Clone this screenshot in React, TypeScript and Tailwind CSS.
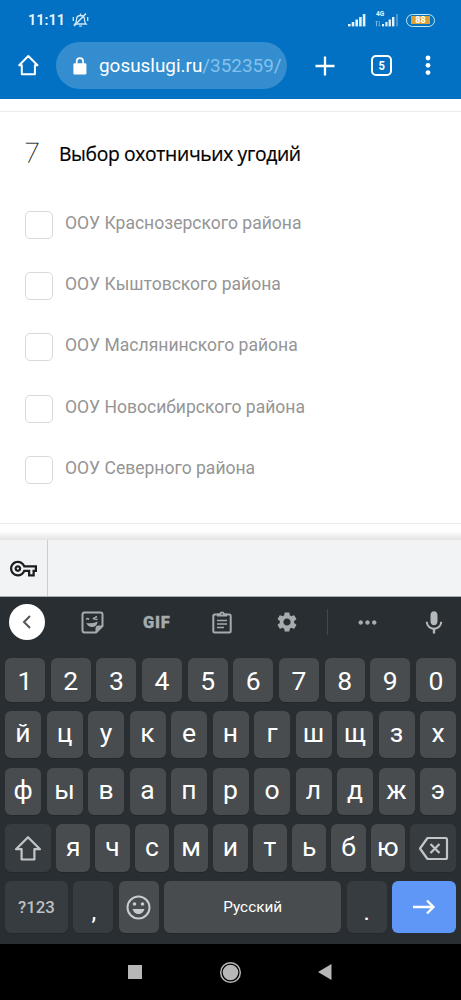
import React from "react";
import {
  MdMic,
  MdMoreHoriz,
  MdOutlineVpnKey,
  MdSettings,
} from "react-icons/md";

const DIGITS = ["1", "2", "3", "4", "5", "6", "7", "8", "9", "0"];
const ROW_TOP = ["й", "ц", "у", "к", "е", "н", "г", "ш", "щ", "з", "х"];
const ROW_MIDDLE = ["ф", "ы", "в", "а", "п", "р", "о", "л", "д", "ж", "э"];
const ROW_BOTTOM = ["я", "ч", "с", "м", "и", "т", "ь", "б", "ю"];
const DISTRICTS = [
  "ООУ Краснозерского района",
  "ООУ Кыштовского района",
  "ООУ Маслянинского района",
  "ООУ Новосибирского района",
  "ООУ Северного района",
];

const KEY = "flex items-center justify-center rounded-[6px] bg-[#484c4f] shadow-[0_1px_0_#23272a]";
const DARK_KEY = "flex items-center justify-center rounded-[6px] bg-[#373c40] shadow-[0_1px_0_#25292c]";

function Signal() {
  return (
    <svg width="18" height="14" viewBox="0 0 18 14" fill="#e4f2fb">
      <rect x="0" y="11" width="2.6" height="2.4" />
      <rect x="3.7" y="9" width="2.6" height="4.4" />
      <rect x="7.4" y="6.5" width="2.6" height="6.9" />
      <rect x="11.1" y="4" width="2.6" height="9.4" />
      <rect x="14.8" y="1" width="2.6" height="12.4" />
    </svg>
  );
}

function StatusBar() {
  return (
    <div className="flex h-[40px] items-center pl-[28px] pr-[26px] text-[#eaf6ff]">
      <span className="w-[37px] pt-[1px] text-[14.500px] font-semibold leading-[20px]">11:11</span>
      <svg className="ml-[7px]" width="17" height="16" viewBox="0 0 17 16" fill="none" stroke="#cfe6f5" strokeWidth="1.3">
        <path d="M3 12c1.1-1 1.5-2.1 1.5-4.2C4.500 5.300 6 3.500 8.500 3.500s4 1.800 4 4.300c0 2.100.4 3.200 1.500 4.200zM7.200 14.200h2.600M8.500 1.500v2M1.300 5v4M15.700 5v4" />
        <path d="M2 14 14 1.500" strokeWidth="1.600" />
      </svg>
      <div className="ml-auto flex items-center">
        <Signal />
        <div className="relative ml-[9px] flex h-[14px] w-[24px]">
          <span className="absolute left-[1px] top-[-2px] text-[6.500px] font-bold leading-[7px]">4G</span>
          <svg width="24" height="14" viewBox="0 0 24 14" fill="#e4f2fb">
            <path d="M.5 8H3v.8H2v4.500H1V8.800H.5zM3.800 8h.8v4h1l-1.300 1.500L3 12h.8z" opacity=".55" />
            <rect x="7" y="11" width="2.100" height="2.400" />
            <rect x="10.400" y="9" width="2.100" height="4.400" />
            <rect x="13.600" y="6.500" width="2.300" height="6.900" />
            <rect x="17" y="4" width="2.400" height="9.400" />
            <rect x="21" y="1" width="2" height="12.400" opacity=".3" />
          </svg>
        </div>
        <div className="ml-[7px] flex h-[13px] w-[29px] items-center rounded-full border-[1.5px] border-[#c8e6ee] bg-[#0672c4] px-[4px]">
          <div className="flex h-[8px] w-full items-center justify-center bg-[#dda032] text-[9px] font-bold leading-[8px] text-white">88</div>
        </div>
      </div>
    </div>
  );
}

function BrowserBar() {
  return (
    <div className="flex h-[59px] items-start pt-[2px]">
      <svg className="ml-[17px] mt-[12px] shrink-0" width="23" height="23" viewBox="0 0 23 23" fill="none" stroke="white" strokeWidth="2" strokeLinejoin="round">
        <path d="M11.300 2 20.500 11.200H17.900V20.300H4.800V11.200H2.200Z" />
      </svg>
      <div className="ml-[16px] flex h-[47px] w-[231px] items-center rounded-full bg-[#348dce]">
        <svg className="ml-[17px] shrink-0" width="14" height="18" viewBox="0 0 14 18">
          <rect x=".4" y="6.300" width="13" height="11.200" rx="1.300" fill="white" />
          <path d="M3.700 7V4.300a3.200 3.200 0 0 1 6.400 0V7" fill="none" stroke="white" strokeWidth="1.700" />
        </svg>
        <div className="ml-[12px] whitespace-nowrap text-[18.900px] leading-[26px] text-white">
          gosuslugi.ru<span className="text-[#83c1ec]">/352359/</span>
        </div>
      </div>
      <svg className="ml-[28px] mt-[14px] shrink-0" width="20" height="20" viewBox="0 0 20 20" stroke="white" strokeWidth="2.300">
        <path d="M10 .5v19M.5 10h19" />
      </svg>
      <div className="ml-[36px] mt-[13px] flex h-[21px] w-[21px] shrink-0 items-center justify-center rounded-[5px] border-2 border-white text-[13px] font-bold leading-none text-white">
        <span className="scale-x-[0.86]">5</span>
      </div>
      <svg className="ml-[33px] mt-[13px] shrink-0" width="6" height="21" viewBox="0 0 6 21" fill="white">
        <circle cx="3" cy="3" r="2.400" />
        <circle cx="3" cy="10.300" r="2.400" />
        <circle cx="3" cy="17.600" r="2.400" />
      </svg>
    </div>
  );
}

function Form() {
  return (
    <main className="flex h-[441px] flex-col bg-white">
      <div className="mt-[12px] h-px shrink-0 bg-[#e9ebec]" />
      <h1 className="mt-[24px] flex h-[34px] items-center pl-[24px]">
        <span className="w-[35px] font-['Lato',sans-serif] text-[27px] font-thin leading-[34px] text-[#111] [-webkit-text-stroke:0.35px_#222]">7</span>
        <span className="whitespace-nowrap pt-[2px] font-['Open_Sans','Noto_Sans',sans-serif] text-[19.300px] font-medium leading-[28px] tracking-[-0.340px] text-black [-webkit-text-stroke:0.2px_#000]">
          Выбор охотничьих угодий
        </span>
      </h1>
      <div className="mt-[41px] flex flex-col">
        {DISTRICTS.map((name) => (
          <label key={name} className="flex h-[61.200px] items-start pl-[25px]">
            <span className="h-[28px] w-[28px] shrink-0 rounded-[5px] border border-[#d9d9d9] bg-white" />
            <span className="ml-[12px] mt-[1px] whitespace-nowrap text-[17.550px] leading-[23px] text-[#959595]">{name}</span>
          </label>
        ))}
      </div>
      <div className="mt-auto mb-[7px] h-px shrink-0 bg-[#e9eaeb]" />
      <div className="h-[9px] shrink-0 bg-gradient-to-b from-white to-[#e4e4e4]" />
    </main>
  );
}

function Toolbar() {
  return (
    <div className="flex h-[61px] items-start pt-[7px] text-[#a6abae]">
      <div className="ml-[9px] flex h-[36px] w-[36px] items-center justify-center rounded-full bg-white">
        <svg width="10" height="14" viewBox="0 0 10 14" fill="none" stroke="#555" strokeWidth="2">
          <path d="M8 1 2 7l6 6" />
        </svg>
      </div>
      <svg className="ml-[36px] mt-[7px]" width="23" height="23" viewBox="0 0 23 23" fill="none" stroke="currentColor" strokeWidth="2">
        <path d="M3.500 1.500h16q2 0 2 2V15l-6.500 6.500H3.500q-2 0-2-2v-16q0-2 2-2Z" />
        <path d="M21.500 15H17q-2 0-2 2v4.500Z" fill="currentColor" strokeWidth="1" />
        <path d="M5.300 8.500q1.300-1.800 2.700 0M11.800 7.800 16 5.500M12.500 7.800l4 .6" strokeWidth="1.500" />
        <path d="M5.300 12q5.600 1 11.400-1.600-.8 5.100-5 5.600-4.500.4-6.400-4Z" fill="currentColor" stroke="none" />
      </svg>
      <span className="ml-[39px] mt-[8px] w-[30px] text-[16.500px] font-black leading-[22px] tracking-[0.700px] [-webkit-text-stroke:0.3px_#a6abae]">GIF</span>
      <svg className="ml-[39px] mt-[7px]" width="20" height="23" viewBox="0 0 20 23" fill="none" stroke="currentColor" strokeWidth="2">
        <rect x="1.300" y="3.500" width="17.400" height="18" rx="1.500" />
        <path d="M5 9.500h10M5 13h10M5 16.500h7" strokeWidth="1.700" />
        <path d="M5 2.500h2.400a2.700 2.700 0 0 1 5.200 0H15V5.500H5Z" fill="currentColor" stroke="none" />
        <circle cx="10" cy="3" r=".8" fill="#292e32" stroke="none" />
      </svg>
      <MdSettings className="ml-[43px] mt-[6px]" size={24} />
      <div className="ml-[28px] mt-[5px] h-[26px] w-px bg-[#45494c]" />
      <MdMoreHoriz className="ml-[26px] mt-[5px]" size={27} />
      <MdMic className="ml-[39px] mt-[5px] text-[#b5b9bc]" size={28} />
    </div>
  );
}

function Keyboard() {
  return (
    <section className="h-[347px] bg-[#292e32] text-white">
      <Toolbar />
      <div className="flex flex-col px-[5px]">
        <div className="grid h-[44px] grid-cols-10 gap-[5.500px]">
          {DIGITS.map((d) => (
            <div key={d} className={KEY}>
              <span className="pt-[2px] text-[26.500px] leading-[32px]">{d}</span>
            </div>
          ))}
        </div>
        <div className="mt-[9px] grid h-[47px] grid-cols-11 gap-[5.500px]">
          {ROW_TOP.map((c) => (
            <div key={c} className={KEY}>
              <span className="pb-[3px] text-[26.500px] leading-[32px]">{c}</span>
            </div>
          ))}
        </div>
        <div className="mt-[10px] grid h-[47px] grid-cols-11 gap-[5.500px]">
          {ROW_MIDDLE.map((c) => (
            <div key={c} className={KEY}>
              <span className="pb-[3px] text-[26.500px] leading-[32px]">{c}</span>
            </div>
          ))}
        </div>
        <div className="mt-[9px] flex h-[48px] gap-[5px]">
          <div className={`${DARK_KEY} w-[46px]`}>
            <svg width="28" height="27" viewBox="0 0 28 27" fill="none" stroke="#c3c6c8" strokeWidth="2.200" strokeLinejoin="round">
              <path d="M14 2.200 26 14.200H20.400V24.500H7.600V14.200H2Z" />
            </svg>
          </div>
          <div className="grid flex-1 grid-cols-9 gap-[5px]">
            {ROW_BOTTOM.map((c) => (
              <div key={c} className={KEY}>
                <span className="pb-[3px] text-[26.500px] leading-[32px]">{c}</span>
              </div>
            ))}
          </div>
          <div className={`${DARK_KEY} w-[46px]`}>
            <svg width="31" height="25" viewBox="0 0 31 25" fill="none" stroke="#c3c6c8" strokeWidth="2.200" strokeLinejoin="round">
              <path d="M9.500 2H27.500Q29 2 29 3.500V21.500Q29 23 27.500 23H9.500L2 12.500Z" />
              <path d="m12.500 8 9 9m0-9-9 9" />
            </svg>
          </div>
        </div>
        <div className="mt-[9px] flex h-[52px] gap-[5.300px]">
          <div className={`${DARK_KEY} w-[63px] pt-[2px] text-[16.800px] font-medium text-[#bdc0c2]`}>?123</div>
          <div className={`${DARK_KEY} w-[40px] pl-[1px] pt-[9px] text-[24px]`}>,</div>
          <div className={`${KEY} w-[40px]`}>
            <svg width="25" height="25" viewBox="0 0 25 25" fill="none" stroke="#c8cbcd" strokeWidth="2">
              <circle cx="12.500" cy="12.500" r="11" />
              <g fill="#c8cbcd" stroke="none">
                <circle cx="8.500" cy="9" r="1.800" />
                <circle cx="16.500" cy="9" r="1.800" />
                <path d="M6.500 14h12q-1.500 5-6 5t-6-5Z" />
              </g>
            </svg>
          </div>
          <div className={`${KEY} flex-1 pt-[1px] text-[15.300px]`}>Русский</div>
          <div className={`${DARK_KEY} w-[40px] pt-[9px] text-[24px]`}>.</div>
          <div className="flex w-[64px] items-center justify-center rounded-[6px] bg-[#5e97f6]">
            <svg width="24" height="16" viewBox="0 0 24 16" fill="none" stroke="white" strokeWidth="2.300">
              <path d="M1 8h20M15 1.500 21.500 8 15 14.500" />
            </svg>
          </div>
        </div>
      </div>
    </section>
  );
}

export default function App() {
  return (
    <div className="flex h-[1000px] w-[461px] flex-col overflow-hidden bg-white font-['Roboto',sans-serif]">
      <header className="h-[99px] shrink-0 bg-[#0271c3]">
        <StatusBar />
        <BrowserBar />
      </header>
      <Form />
      <div className="flex h-[57px] shrink-0 border-b border-[#a9acae] bg-[#f1f3f4]">
        <div className="flex w-[48px] items-center justify-center border-r border-[#cbcdcf]">
          <MdOutlineVpnKey className="text-[#1c1d1f]" size={27} />
        </div>
      </div>
      <Keyboard />
      <nav className="flex h-[56px] items-center bg-black">
        <div className="ml-[128px] h-[14px] w-[14px] bg-[#b7b7b7]" />
        <svg className="ml-[77px]" width="23" height="23" viewBox="0 0 23 23">
          <circle cx="11.500" cy="11.500" r="9.800" fill="none" stroke="#b7b7b7" strokeWidth="1.500" />
          <circle cx="11.500" cy="11.500" r="7.800" fill="#b7b7b7" />
        </svg>
        <svg className="ml-[76px]" width="14" height="16" viewBox="0 0 14 16" fill="#b7b7b7">
          <path d="M13.500 0v16L0 8Z" />
        </svg>
      </nav>
    </div>
  );
}
